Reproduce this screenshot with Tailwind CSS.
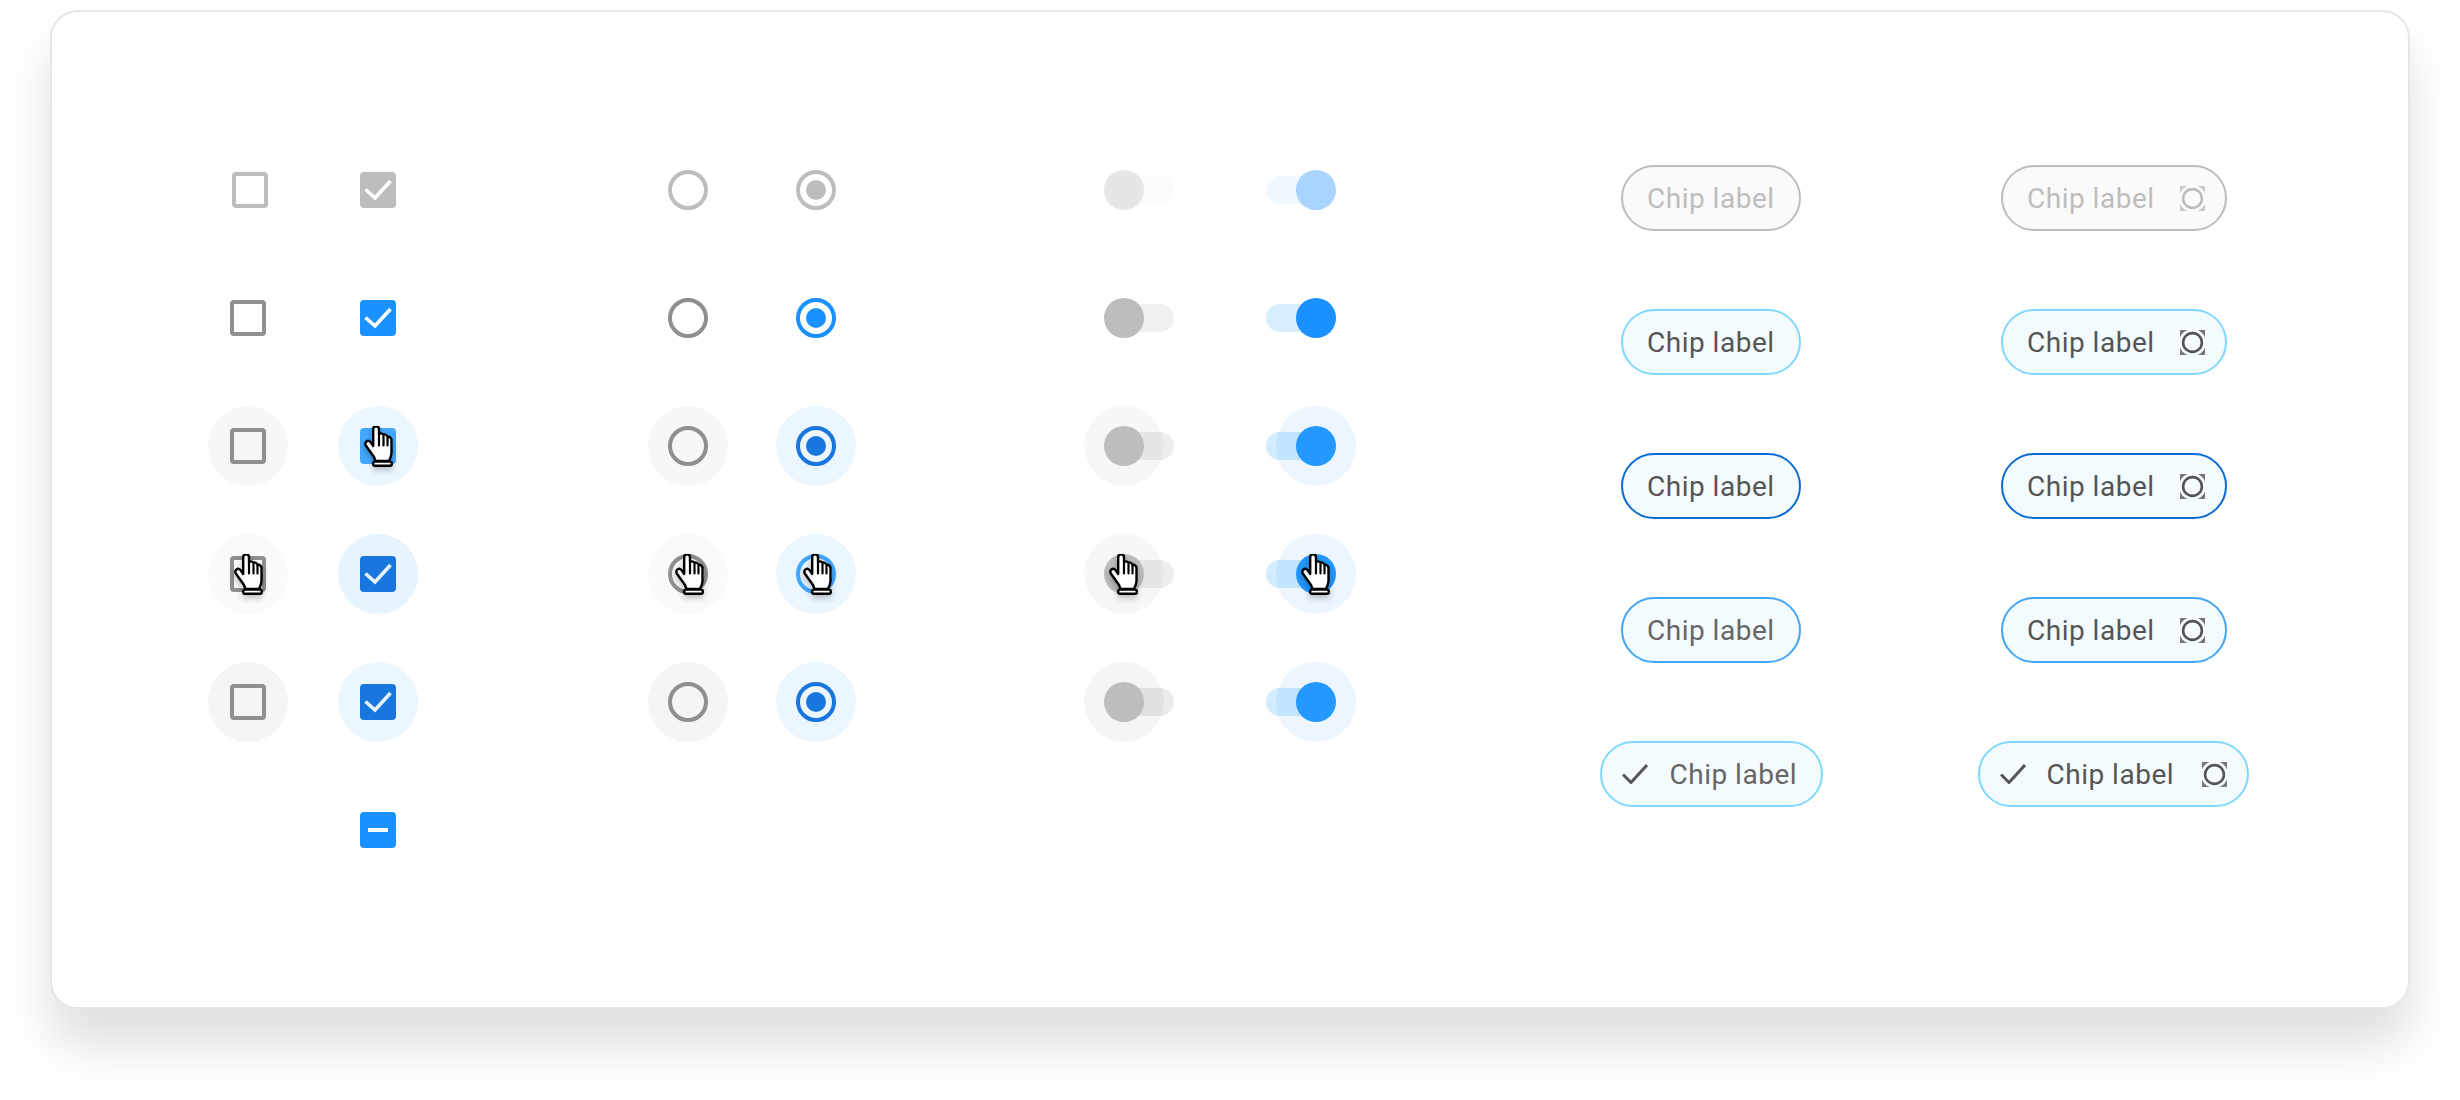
<!DOCTYPE html>
<html lang="en">
<head>
    <meta charset="UTF-8">
    <meta name="viewport" content="width=device-width, initial-scale=1.0">
    <title>Selection controls</title>
    <script src="https://cdn.jsdelivr.net/npm/@tailwindcss/browser@4"></script>
</head>
<body class="bg-white font-['Roboto',sans-serif] h-[1100px] pl-[50px] pt-[10px] overflow-hidden">
    <!-- shared icons -->
    <svg class="hidden" xmlns="http://www.w3.org/2000/svg">
        <symbol id="hand" viewBox="0 0 29 41">
            <path d="M9.2 20V3.2A2.9 2.9 0 0 1 15 3.2V8Q17.5 6.5 19.5 8.5Q22 8 23.5 10.5Q26.5 10.5 27.5 13.5V27Q27.5 30 25 35H11.5L10 31L1.8 19.5Q.5 17 2.5 15.5Q4.5 14 6.5 16Z" fill="#fff" stroke="#000" stroke-width="2.4" stroke-linejoin="round"/>
            <path d="M15 8v11.5M19.5 9v10.5M23.5 11v8.5" fill="none" stroke="#000" stroke-width="2.2" stroke-linecap="round"/>
            <rect x="9.2" y="35.6" width="18.6" height="4.2" rx="1.8" fill="#fff" stroke="#000" stroke-width="2.4"/>
        </symbol>
        <symbol id="target" viewBox="0 0 25 25">
            <path d="M0 0H7.5A13.5 13.5 0 0 0 0 7.5ZM25 0H17.5A13.5 13.5 0 0 1 25 7.5ZM0 25H7.5A13.5 13.5 0 0 1 0 17.5ZM25 25H17.5A13.5 13.5 0 0 0 25 17.5Z" fill="currentColor" opacity="0.8"/>
            <circle cx="12.5" cy="12.5" r="9.4" fill="none" stroke="currentColor" stroke-width="2.6"/>
        </symbol>
        <symbol id="check" viewBox="0 0 36 36">
            <path d="M5.5 17.5L15 26L30.5 9" fill="none" stroke="currentColor" stroke-width="3.6"/>
        </symbol>
        <symbol id="chip-check" viewBox="0 0 26 20">
            <path d="M1 10.5L9 18.5L25 1" fill="none" stroke="currentColor" stroke-width="3"/>
        </symbol>
    </svg>

    <div class="w-[2360px] h-[999px] bg-white border-2 border-[#e3e7ec] rounded-[28px] shadow-[0_36px_50px_rgba(0,0,0,0.13)] pl-[156px] pt-[114px] flex items-start">

        <!-- Checkboxes -->
        <div class="grid grid-cols-[80px_80px] auto-rows-[128px] gap-x-[50px] place-items-center">
            <div class="w-9 h-9 translate-x-[2px] border-4 border-[#bdbdbd] rounded-[4px]"></div>
            <div class="w-9 h-9 bg-[#bdbdbd] rounded-[4px] text-white"><svg class="w-9 h-9"><use href="#check"/></svg></div>

            <div class="w-9 h-9 border-4 border-[#8f8f8f] rounded-[4px]"></div>
            <div class="w-9 h-9 bg-[#1a91ff] rounded-[4px] text-white"><svg class="w-9 h-9"><use href="#check"/></svg></div>

            <div class="w-20 h-20 rounded-full bg-[#f7f7f7] flex items-center justify-center">
                <div class="w-9 h-9 border-4 border-[#8f8f8f] rounded-[4px]"></div>
            </div>
            <div class="relative w-20 h-20 rounded-full bg-[#ebf6ff] flex items-center justify-center">
                <div class="w-9 h-9 bg-[#42a8ff] rounded-[4px]"></div>
                <svg class="absolute left-[26px] top-[20px] w-[29px] h-[41px] drop-shadow-[0_3px_3px_rgba(0,0,0,0.25)]"><use href="#hand"/></svg>
            </div>

            <div class="relative w-20 h-20 rounded-full bg-[#fafafa] flex items-center justify-center">
                <div class="w-9 h-9 border-4 border-[#8f8f8f] rounded-[4px]"></div>
                <svg class="absolute left-[26px] top-[20px] w-[29px] h-[41px] drop-shadow-[0_3px_3px_rgba(0,0,0,0.25)]"><use href="#hand"/></svg>
            </div>
            <div class="w-20 h-20 rounded-full bg-[#e6f4ff] flex items-center justify-center">
                <div class="w-9 h-9 bg-[#1976de] rounded-[4px] text-[#e6f4ff]"><svg class="w-9 h-9"><use href="#check"/></svg></div>
            </div>

            <div class="w-20 h-20 rounded-full bg-[#f5f5f5] flex items-center justify-center">
                <div class="w-9 h-9 border-4 border-[#8f8f8f] rounded-[4px]"></div>
            </div>
            <div class="w-20 h-20 rounded-full bg-[#ebf6ff] flex items-center justify-center">
                <div class="w-9 h-9 bg-[#1976de] rounded-[4px] text-[#e6f4ff]"><svg class="w-9 h-9"><use href="#check"/></svg></div>
            </div>

            <div></div>
            <div class="w-9 h-9 bg-[#1a91ff] rounded-[4px] flex items-center justify-center"><div class="w-5 h-1 bg-white"></div></div>
        </div>

        <!-- Radios -->
        <div class="ml-[230px] grid grid-cols-[80px_80px] auto-rows-[128px] gap-x-[48px] place-items-center">
            <div class="w-10 h-10 rounded-full border-4 border-[#bdbdbd]"></div>
            <div class="w-10 h-10 rounded-full border-4 border-[#bdbdbd] flex items-center justify-center"><div class="w-5 h-5 rounded-full bg-[#bdbdbd]"></div></div>

            <div class="w-10 h-10 rounded-full border-4 border-[#8f8f8f]"></div>
            <div class="w-10 h-10 rounded-full border-4 border-[#1a91ff] flex items-center justify-center"><div class="w-5 h-5 rounded-full bg-[#1a91ff]"></div></div>

            <div class="w-20 h-20 rounded-full bg-[#f7f7f7] flex items-center justify-center">
                <div class="w-10 h-10 rounded-full border-4 border-[#8f8f8f]"></div>
            </div>
            <div class="w-20 h-20 rounded-full bg-[#ebf6ff] flex items-center justify-center">
                <div class="w-10 h-10 rounded-full border-4 border-[#1976de] flex items-center justify-center"><div class="w-5 h-5 rounded-full bg-[#1976de]"></div></div>
            </div>

            <div class="relative w-20 h-20 rounded-full bg-[#fafafa] flex items-center justify-center">
                <div class="w-10 h-10 rounded-full border-4 border-[#8f8f8f]"></div>
                <svg class="absolute left-[27px] top-[20px] w-[29px] h-[41px] drop-shadow-[0_3px_3px_rgba(0,0,0,0.25)]"><use href="#hand"/></svg>
            </div>
            <div class="relative w-20 h-20 rounded-full bg-[#ebf6ff] flex items-center justify-center">
                <div class="w-10 h-10 rounded-full border-4 border-[#42a8ff]"></div>
                <svg class="absolute left-[27px] top-[20px] w-[29px] h-[41px] drop-shadow-[0_3px_3px_rgba(0,0,0,0.25)]"><use href="#hand"/></svg>
            </div>

            <div class="w-20 h-20 rounded-full bg-[#f5f5f5] flex items-center justify-center">
                <div class="w-10 h-10 rounded-full border-4 border-[#8f8f8f]"></div>
            </div>
            <div class="w-20 h-20 rounded-full bg-[#ebf6ff] flex items-center justify-center">
                <div class="w-10 h-10 rounded-full border-4 border-[#1976de] flex items-center justify-center"><div class="w-5 h-5 rounded-full bg-[#1976de]"></div></div>
            </div>
        </div>

        <!-- Toggles -->
        <div class="ml-[228px] grid grid-cols-[80px_80px] auto-rows-[128px] gap-x-[112px] place-items-center">
            <div class="relative w-20 h-20 flex items-center justify-center">
                <div class="absolute left-[20px] top-[26px] w-[70px] h-7 rounded-full bg-[#fbfbfb]"></div>
                <div class="relative w-10 h-10 rounded-full bg-[#e6e6e6]"></div>
            </div>
            <div class="relative w-20 h-20 flex items-center justify-center">
                <div class="absolute left-[-10px] top-[26px] w-[70px] h-7 rounded-full bg-[#eff8ff]"></div>
                <div class="relative w-10 h-10 rounded-full bg-[#a8d4ff]"></div>
            </div>

            <div class="relative w-20 h-20 flex items-center justify-center">
                <div class="absolute left-[20px] top-[26px] w-[70px] h-7 rounded-full bg-[#f0f0f0]"></div>
                <div class="relative w-10 h-10 rounded-full bg-[#bdbdbd]"></div>
            </div>
            <div class="relative w-20 h-20 flex items-center justify-center">
                <div class="absolute left-[-10px] top-[26px] w-[70px] h-7 rounded-full bg-[#d6eeff]"></div>
                <div class="relative w-10 h-10 rounded-full bg-[#1a91ff]"></div>
            </div>

            <div class="relative w-20 h-20 flex items-center justify-center">
                <div class="absolute left-[20px] top-[26px] w-[70px] h-7 rounded-full bg-[#eeeeee]"></div>
                <div class="absolute inset-0 rounded-full bg-black/[0.03]"></div>
                <div class="relative w-10 h-10 rounded-full bg-[#bdbdbd]"></div>
            </div>
            <div class="relative w-20 h-20 flex items-center justify-center">
                <div class="absolute left-[-10px] top-[26px] w-[70px] h-7 rounded-full bg-[#d2ecff]"></div>
                <div class="absolute inset-0 rounded-full bg-[#1a91ff]/[0.08]"></div>
                <div class="relative w-10 h-10 rounded-full bg-[#2398ff]"></div>
            </div>

            <div class="relative w-20 h-20 flex items-center justify-center">
                <div class="absolute left-[20px] top-[26px] w-[70px] h-7 rounded-full bg-[#eeeeee]"></div>
                <div class="absolute inset-0 rounded-full bg-black/[0.03]"></div>
                <div class="relative w-10 h-10 rounded-full bg-[#bdbdbd]"></div>
                <svg class="absolute left-[25px] top-[20px] w-[29px] h-[41px] drop-shadow-[0_3px_3px_rgba(0,0,0,0.25)]"><use href="#hand"/></svg>
            </div>
            <div class="relative w-20 h-20 flex items-center justify-center">
                <div class="absolute left-[-10px] top-[26px] w-[70px] h-7 rounded-full bg-[#d2ecff]"></div>
                <div class="absolute inset-0 rounded-full bg-[#1a91ff]/[0.08]"></div>
                <div class="relative w-10 h-10 rounded-full bg-[#2398ff]"></div>
                <svg class="absolute left-[25px] top-[20px] w-[29px] h-[41px] drop-shadow-[0_3px_3px_rgba(0,0,0,0.25)]"><use href="#hand"/></svg>
            </div>

            <div class="relative w-20 h-20 flex items-center justify-center">
                <div class="absolute left-[20px] top-[26px] w-[70px] h-7 rounded-full bg-[#ebebeb]"></div>
                <div class="absolute inset-0 rounded-full bg-black/[0.04]"></div>
                <div class="relative w-10 h-10 rounded-full bg-[#bdbdbd]"></div>
            </div>
            <div class="relative w-20 h-20 flex items-center justify-center">
                <div class="absolute left-[-10px] top-[26px] w-[70px] h-7 rounded-full bg-[#d2ecff]"></div>
                <div class="absolute inset-0 rounded-full bg-[#1a91ff]/[0.08]"></div>
                <div class="relative w-10 h-10 rounded-full bg-[#2398ff]"></div>
            </div>
        </div>

        <!-- Chips -->
        <div class="ml-[243px] mt-[39px] grid grid-cols-[224px_272px] auto-rows-[66px] gap-x-[154px] gap-y-[78px] place-items-center text-[28px] tracking-[0.5px] leading-none whitespace-nowrap">
            <div class="w-[180px] h-[66px] flex items-center pt-[2px] px-[24px] rounded-full border-2 border-[#bdbdbd] bg-[#fafafa] text-[#bdbdbd]">Chip label</div>
            <div class="w-[226px] ml-[2px] h-[66px] flex items-center justify-between pt-[2px] pl-[24px] pr-[20px] rounded-full border-2 border-[#bdbdbd] bg-[#fafafa] text-[#bdbdbd]">Chip label<svg class="w-[25px] h-[25px] -mt-[2px]"><use href="#target"/></svg></div>

            <div class="w-[180px] h-[66px] flex items-center pt-[2px] px-[24px] rounded-full border-2 border-[#80d8ff] bg-[#f3fbff] text-[#555555]">Chip label</div>
            <div class="w-[226px] ml-[2px] h-[66px] flex items-center justify-between pt-[2px] pl-[24px] pr-[20px] rounded-full border-2 border-[#80d8ff] bg-[#f3fbff] text-[#555555]">Chip label<svg class="w-[25px] h-[25px] -mt-[2px]"><use href="#target"/></svg></div>

            <div class="w-[180px] h-[66px] flex items-center pt-[2px] px-[24px] rounded-full border-2 border-[#0b6bd6] bg-[#f3fbff] text-[#555555]">Chip label</div>
            <div class="w-[226px] ml-[2px] h-[66px] flex items-center justify-between pt-[2px] pl-[24px] pr-[20px] rounded-full border-2 border-[#0b6bd6] bg-[#f3fbff] text-[#555555]">Chip label<svg class="w-[25px] h-[25px] -mt-[2px]"><use href="#target"/></svg></div>

            <div class="w-[180px] h-[66px] flex items-center pt-[2px] px-[24px] rounded-full border-2 border-[#42a5f5] bg-[#f3fbff] text-[#666666]">Chip label</div>
            <div class="w-[226px] ml-[2px] h-[66px] flex items-center justify-between pt-[2px] pl-[24px] pr-[20px] rounded-full border-2 border-[#42a5f5] bg-[#f3fbff] text-[#555555]">Chip label<svg class="w-[25px] h-[25px] -mt-[2px]"><use href="#target"/></svg></div>

            <div class="w-[223px] h-[66px] flex items-center pt-[2px] pl-[20px] gap-[22px] rounded-full border-2 border-[#80d8ff] bg-[#f3fbff] text-[#555555]"><svg class="w-[26px] h-5 -mt-[2px]"><use href="#chip-check"/></svg><span class="text-[#666666]">Chip label</span></div>
            <div class="w-[271px] h-[66px] flex items-center pt-[2px] pl-[20px] pr-[20px] gap-[21px] rounded-full border-2 border-[#80d8ff] bg-[#f3fbff] text-[#555555]"><svg class="w-[26px] h-5 -mt-[2px]"><use href="#chip-check"/></svg><span>Chip label</span><svg class="w-[25px] h-[25px] ml-auto -mt-[2px]"><use href="#target"/></svg></div>
        </div>
    </div>
</body>
</html>
